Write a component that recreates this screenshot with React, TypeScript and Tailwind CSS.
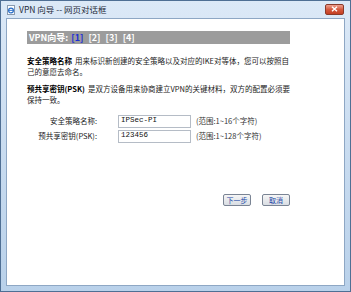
import React from "react";

const cjk = { fontFamily: '"Noto Sans CJK SC", "Liberation Sans", sans-serif' };

function PageIcon() {
  return (
    <svg width="10" height="10" viewBox="0 0 10 10">
      <rect x="1.5" y="0.5" width="7" height="9" fill="#fff" stroke="#8a9bb0" />
      <circle cx="5" cy="5.5" r="2.4" fill="none" stroke="#2a6fc9" strokeWidth="1.2" />
      <line x1="2.8" y1="5.4" x2="7.2" y2="5.4" stroke="#2a6fc9" strokeWidth="0.9" />
    </svg>
  );
}

function FormRow({ label, value, hint }: { label: string; value: string; hint: string }) {
  return (
    <div className="flex items-center h-[14px]">
      <div className="w-[70px] text-right text-[7.5px] text-[#222]">{label}</div>
      <div
        className="ml-[21px] w-[73px] h-[13px] border border-[#b5bcc6] bg-white flex items-center pl-[2px] text-[7.5px] text-[#111]"
        style={{ fontFamily: '"Liberation Mono", monospace' }}
      >
        {value}
      </div>
      <div className="ml-[5px] text-[7.5px] text-[#333]">{hint}</div>
    </div>
  );
}

function Para({ title, first, rest }: { title: string; first: string; rest: string }) {
  return (
    <div className="w-[263px] text-[7.5px] leading-[11px] text-[#222]">
      <div className="flex whitespace-nowrap">
        <b className="text-black">{title}</b>
        <span className="ml-[3px]">{first}</span>
      </div>
      <div>{rest}</div>
    </div>
  );
}

export default function App() {
  return (
    <div
      className="w-[351px] h-[292px] flex flex-col border border-[#4f6f94] bg-gradient-to-b from-[#dce9f7] via-[#c9dcf0] to-[#b9d1ea] overflow-hidden"
      style={cjk}
    >
      {/* title bar */}
      <div className="h-[17px] flex items-center pl-[5px] pr-[6px] shrink-0">
        <PageIcon />
        <span className="ml-[3px] text-[8.5px] text-[#1e2a3a] leading-none">VPN 向导 -- 网页对话框</span>
        <div className="ml-auto mt-[-1px] w-[19px] h-[11px] rounded-[2px] border border-[#8a3a2a] bg-gradient-to-b from-[#eea08f] via-[#d4593e] to-[#c43f22] flex items-center justify-center">
          <svg width="7" height="6" viewBox="0 0 7 6">
            <path d="M1 0.8 L6 5.2 M6 0.8 L1 5.2" stroke="#fff" strokeWidth="1.4" />
          </svg>
        </div>
      </div>

      {/* client area */}
      <div className="flex-1 mx-[5px] mb-[5px] border border-[#8ea7c4] bg-white pl-[20px] pt-[12px] flex flex-col">
        <div className="w-[263px] h-[13px] bg-[#9c9c9c] flex items-center pl-[2px] text-[9px] font-bold text-white">
          <span>VPN向导:</span>
          <span className="ml-[3px] text-[#1a2dd6]">[1]</span>
          <span className="ml-[5px]">[2]</span>
          <span className="ml-[5px]">[3]</span>
          <span className="ml-[5px]">[4]</span>
        </div>

        <div className="mt-[11px]">
          <Para
            title="安全策略名称"
            first="用来标识新创建的安全策略以及对应的IKE对等体，您可以按照自"
            rest="己的意愿去命名。"
          />
        </div>

        <div className="mt-[6px]">
          <Para
            title="预共享密钥(PSK)"
            first="是双方设备用来协商建立VPN的关键材料，双方的配置必须要"
            rest="保持一致。"
          />
        </div>

        <div className="mt-[9px] flex flex-col gap-[1px]">
          <FormRow label="安全策略名称:" value="IPSec-PI" hint="(范围:1~16个字符)" />
          <FormRow label="预共享密钥(PSK):" value="123456" hint="(范围:1~128个字符)" />
        </div>

        <div className="mt-[51px] w-[263px] flex justify-end gap-[11px]">
          <button className="w-[28px] h-[12px] border border-[#7a8494] rounded-[2px] bg-gradient-to-b from-[#f6f6f6] to-[#d9dde3] text-[7px] text-[#1d47a8] leading-none">
            下一步
          </button>
          <button className="w-[28px] h-[12px] border border-[#7a8494] rounded-[2px] bg-gradient-to-b from-[#f6f6f6] to-[#d9dde3] text-[7px] text-[#1d47a8] leading-none">
            取消
          </button>
        </div>
      </div>
    </div>
  );
}
